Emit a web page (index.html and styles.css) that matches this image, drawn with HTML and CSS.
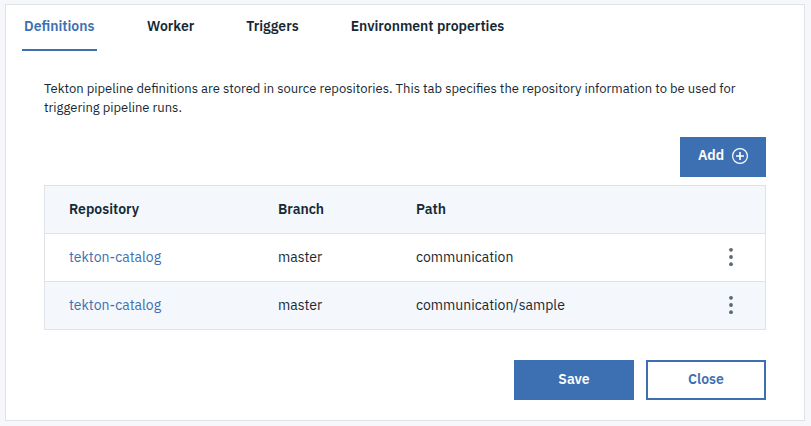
FILE: index.html
```html
<!DOCTYPE html>
<html lang="en">
<head>
<meta charset="utf-8">
<title>Tekton pipeline definitions</title>
<link rel="stylesheet" href="styles.css">
</head>
<body>
<main class="panel">
  <nav class="tabs">
    <a class="tab tab-active">Definitions</a>
    <a class="tab">Worker</a>
    <a class="tab">Triggers</a>
    <a class="tab">Environment properties</a>
  </nav>
  <section class="content">
    <p class="description">Tekton pipeline definitions are stored in source repositories. This tab specifies the repository information to be used for<br>triggering pipeline runs.</p>
    <div class="toolbar">
      <button class="btn btn-add"><span class="add-label">Add</span>
        <svg class="add-icon" width="16" height="16" viewBox="0 0 16 16" fill="none" stroke="#fff"><circle cx="8" cy="8" r="7.4" stroke-width="1.2"/><path d="M8 4v8M4 8h8" stroke-width="1.6"/></svg>
      </button>
    </div>
    <div class="table">
      <div class="row row-head"><span>Repository</span><span>Branch</span><span>Path</span></div>
      <div class="row">
        <a class="link">tekton-catalog</a><span>master</span><span>communication</span>
        <svg class="menu" width="4" height="20" viewBox="0 0 4 20" fill="#5a6872"><circle cx="2" cy="2.8" r="1.9"/><circle cx="2" cy="10" r="1.9"/><circle cx="2" cy="17.2" r="1.9"/></svg>
      </div>
      <div class="row row-alt">
        <a class="link">tekton-catalog</a><span>master</span><span>communication/sample</span>
        <svg class="menu" width="4" height="20" viewBox="0 0 4 20" fill="#5a6872"><circle cx="2" cy="2.8" r="1.9"/><circle cx="2" cy="10" r="1.9"/><circle cx="2" cy="17.2" r="1.9"/></svg>
      </div>
    </div>
    <div class="actions">
      <button class="btn btn-save">Save</button>
      <button class="btn btn-close">Close</button>
    </div>
  </section>
</main>
</body>
</html>
```
FILE: styles.css
```css
* { box-sizing: border-box; }

body {
  margin: 0;
  padding: 4px 6px 5px 5px;
  background: #f5f7fb;
  color: #152935;
  font-family: "IBM Plex Sans", Roboto, sans-serif;
}

.panel {
  height: 417px;
  background: #fff;
  border: 1px solid #dfe3e6;
}

.tabs {
  display: flex;
  height: 46px;
  padding-left: 16px;
  gap: 48px;
}

.tab {
  height: 46px;
  padding: 12px 2px 0;
  font-size: 14px;
  line-height: 19px;
  font-weight: 600;
  white-space: nowrap;
}

.tab-active {
  width: 75px;
  color: #3d70b2;
  border-bottom: 2px solid #3d70b2;
}

.content { padding: 28px 38px 0; }

.description {
  margin: 0;
  font-size: 13px;
  line-height: 19px;
  white-space: nowrap;
}

.toolbar {
  display: flex;
  justify-content: flex-end;
  margin: 20px 0 8px;
}

.btn {
  display: flex;
  align-items: center;
  justify-content: center;
  height: 40px;
  padding: 0 0 2px;
  border: 0;
  background: #3d70b2;
  color: #fff;
  font: 600 14px/18px "IBM Plex Sans", Roboto, sans-serif;
}

.btn-add { width: 86px; gap: 8px; }
.add-label { padding-bottom: 2px; }
.add-icon { flex: none; }

.table {
  height: 145px;
  border: 1px solid #dfe3e6;
}

.row {
  display: grid;
  grid-template-columns: 209px 138px 1fr 4px;
  align-items: center;
  height: 48px;
  padding: 0 32px 1px 24px;
  border-bottom: 1px solid #dfe3e6;
  font-size: 14px;
  line-height: 18px;
}

.row:last-child { border-bottom: 0; height: 47px; }
.row-head { font-weight: 600; }
.row-head, .row-alt { background: #f4f7fb; }
.link { color: #3d70b2; }

.actions {
  display: flex;
  justify-content: flex-end;
  gap: 12px;
  margin-top: 30px;
}

.btn-save, .btn-close { width: 120px; }

.btn-close {
  border: 2px solid #3d70b2;
  background: #fff;
  color: #3d70b2;
}
```
